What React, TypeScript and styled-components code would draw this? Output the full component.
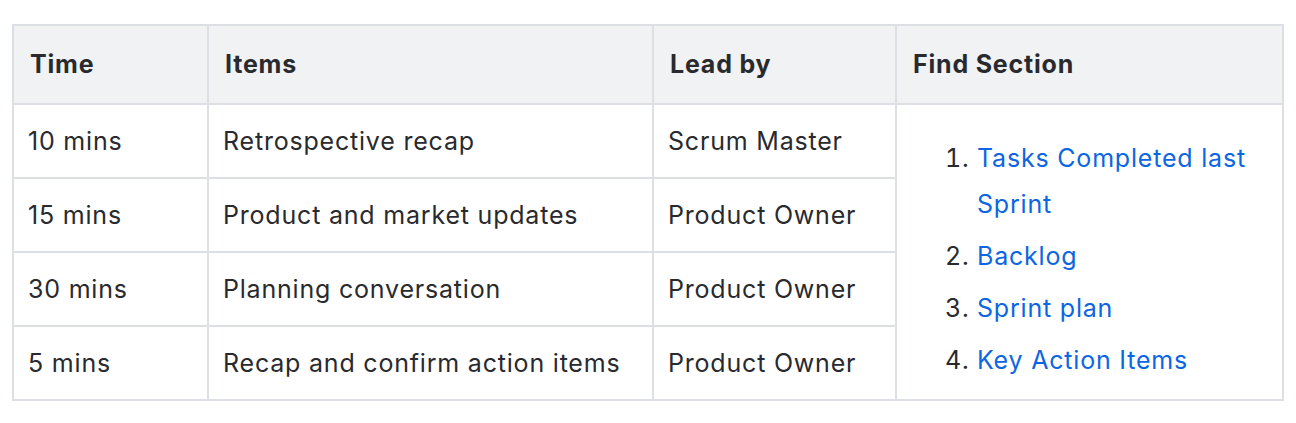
import styled, { createGlobalStyle } from 'styled-components';

const GlobalStyle = createGlobalStyle`
  html, body {
    margin: 0;
    padding: 0;
    background: #fff;
  }
  body {
    font-family: Inter, 'Noto Sans', 'Liberation Sans', sans-serif;
    color: #292a2e;
    -webkit-font-smoothing: antialiased;
  }
`;

const rows = [
  { time: '10 mins', item: 'Retrospective recap', lead: 'Scrum Master' },
  { time: '15 mins', item: 'Product and market updates', lead: 'Product Owner' },
  { time: '30 mins', item: 'Planning conversation', lead: 'Product Owner' },
  { time: '5 mins', item: 'Recap and confirm action items', lead: 'Product Owner' },
];

const sections = ['Tasks Completed last Sprint', 'Backlog', 'Sprint plan', 'Key Action Items'];

const App = () => {
  return (
    <>
      <GlobalStyle />
      <Page>
        <Table>
          <colgroup>
            <col style={{ width: 195 }} />
            <col style={{ width: 445 }} />
            <col style={{ width: 243 }} />
            <col style={{ width: 387 }} />
          </colgroup>
          <thead>
            <tr>
              <HeadCell>Time</HeadCell>
              <HeadCell>Items</HeadCell>
              <HeadCell>Lead by</HeadCell>
              <HeadCell>Find Section</HeadCell>
            </tr>
          </thead>
          <tbody>
            {rows.map((row, i) => (
              <tr key={row.time}>
                <Cell>{row.time}</Cell>
                <Cell>{row.item}</Cell>
                <Cell>{row.lead}</Cell>
                {i === 0 && (
                  <SectionCell rowSpan={rows.length}>
                    <SectionList>
                      {sections.map((s) => (
                        <SectionItem key={s}>
                          <SectionLink href="#">{s}</SectionLink>
                        </SectionItem>
                      ))}
                    </SectionList>
                  </SectionCell>
                )}
              </tr>
            ))}
          </tbody>
        </Table>
      </Page>
    </>
  );
};

export default App;

const Page = styled.div`
  padding: 24px 12px;
`;

const Table = styled.table`
  width: 1270px;
  table-layout: fixed;
  border-collapse: collapse;
  font-size: 25px;
  letter-spacing: 0.8px;
  line-height: 36px;
`;

const HeadCell = styled.th`
  padding: 20px 14px 21px 16px;
  background: #f1f2f4;
  border: 2px solid #dcdfe4;
  text-align: left;
  font-weight: 700;
  color: #292a2e;
`;

const Cell = styled.td`
  padding: 18px 14px;
  border: 2px solid #dcdfe4;
  vertical-align: middle;
  color: #292a2e;
`;

const SectionCell = styled.td`
  padding: 30px 14px 0;
  border: 2px solid #dcdfe4;
  vertical-align: top;
`;

const SectionList = styled.ol`
  margin: 0;
  padding-left: 66px;
  line-height: 46px;
`;

const SectionItem = styled.li`
  & + & {
    margin-top: 6px;
  }
`;

const SectionLink = styled.a`
  color: #0c66e4;
  text-decoration: none;
`;
